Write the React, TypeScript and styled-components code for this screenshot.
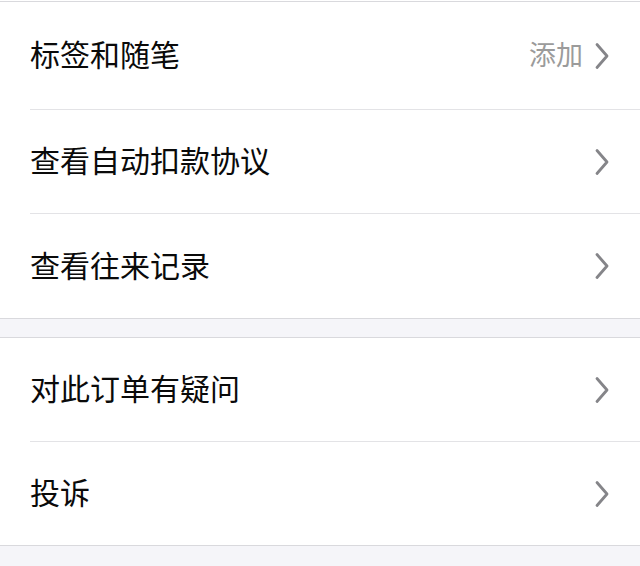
import React from "react";
import styled, { createGlobalStyle } from "styled-components";

const Global = createGlobalStyle`
  html, body { margin: 0; padding: 0; background: #f5f5f9; }
  body { font-family: "Noto Sans CJK SC", "Noto Sans", sans-serif; -webkit-font-smoothing: antialiased; }
`;

const Page = styled.div`
  display: flex;
  flex-direction: column;
  padding-top: 1px;
  background: linear-gradient(#fff 0 1px, #f5f5f9 1px);
`;

const Group = styled.div<{ $gap?: number }>`
  background: #fff;
  border-top: 1px solid #d9d9dd;
  border-bottom: 1px solid #d9d9dd;
  margin-top: ${(p) => p.$gap ?? 0}px;
`;

const Row = styled.div`
  padding-left: 30px;
  background: #fff;
`;

const Inner = styled.div<{ $h: number; $last?: boolean }>`
  display: flex;
  align-items: center;
  height: ${(p) => p.$h}px;
  padding-right: 31px;
  border-bottom: ${(p) => (p.$last ? "none" : "1px solid #e3e3e6")};
`;

const Label = styled.span`
  flex: 1;
  font-size: 30px;
  color: #0a0a0a;
  line-height: 1;
  padding-bottom: 5px;
`;

const Extra = styled.span`
  font-size: 27px;
  color: #9b9b9b;
  margin-right: 12px;
  line-height: 1;
  padding-bottom: 5px;
`;

const Chevron = () => (
  <svg width="14" height="28" viewBox="0 0 14 28" fill="none">
    <path d="M2 2.5 L12 14 L2 25.5" stroke="#858589" strokeWidth="2.8" strokeLinecap="round" strokeLinejoin="round" />
  </svg>
);

type Item = { label: string; extra?: string; h: number };

const group1: Item[] = [
  { label: "标签和随笔", extra: "添加", h: 107 },
  { label: "查看自动扣款协议", h: 103 },
  { label: "查看往来记录", h: 104 },
];

const group2: Item[] = [
  { label: "对此订单有疑问", h: 103 },
  { label: "投诉", h: 103 },
];

const renderGroup = (items: Item[]) =>
  items.map((it, i) => (
    <Row key={it.label}>
      <Inner $h={it.h} $last={i === items.length - 1}>
        <Label>{it.label}</Label>
        {it.extra && <Extra>{it.extra}</Extra>}
        <Chevron />
      </Inner>
    </Row>
  ));

export default function App() {
  return (
    <>
      <Global />
      <Page>
        <Group>{renderGroup(group1)}</Group>
        <Group $gap={18}>{renderGroup(group2)}</Group>
      </Page>
    </>
  );
}
